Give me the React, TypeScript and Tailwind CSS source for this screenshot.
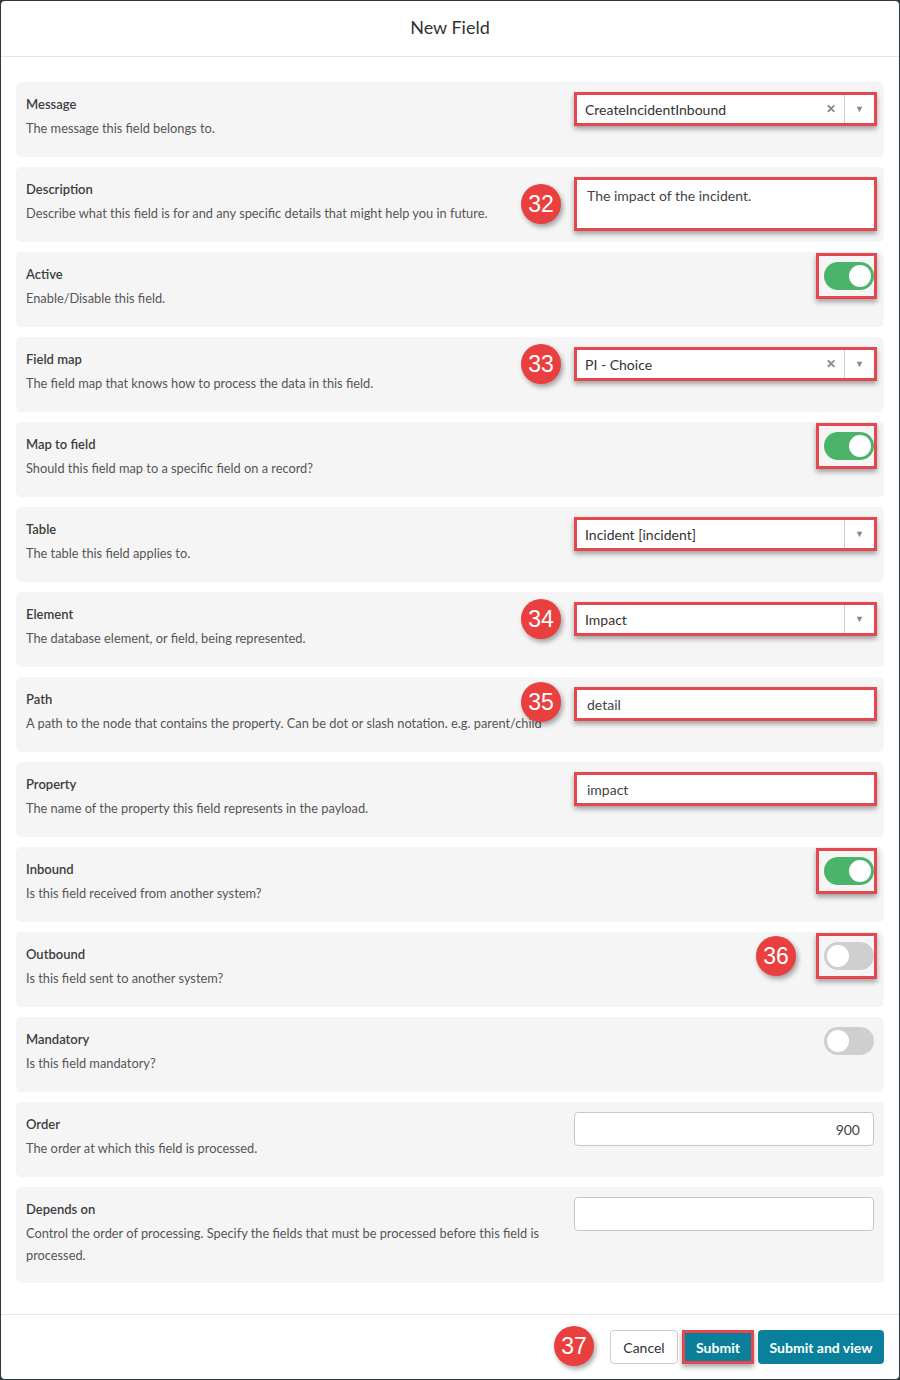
import React from "react";

const RED = "border-[3px] border-[#e4474d] shadow-[0_3px_5px_rgba(0,0,0,0.35)]";

function Badge({ n, className }: { n: string; className: string }) {
  return (
    <div
      className={`absolute z-10 flex h-[40px] w-[40px] items-center justify-center rounded-full bg-[#ea3f3f] text-[23px] leading-none text-white shadow-[2px_3px_5px_rgba(0,0,0,0.35)] ${className}`}
      style={{ fontFamily: '"Liberation Sans", Arial, sans-serif' }}
    >
      {n}
    </div>
  );
}

function Toggle({ on, highlight }: { on: boolean; highlight?: boolean }) {
  return (
    <div className="relative ml-auto h-[28px] w-[50px]">
      {highlight && (
        <div className="pointer-events-none absolute -left-[8px] -right-[3px] -top-[9px] -bottom-[9px] border-[3px] border-[#e4474d] shadow-[0_3px_5px_rgba(0,0,0,0.35)]" />
      )}
      <div
        className={`flex h-[28px] w-[50px] items-center rounded-full px-[3px] ${
          on ? "justify-end bg-[#4cb46a]" : "justify-start bg-[#cfcfcf]"
        }`}
      >
        <div className="h-[22px] w-[22px] rounded-full bg-white" />
      </div>
    </div>
  );
}

function Select({ value, clear }: { value: string; clear?: boolean }) {
  return (
    <div className={`flex h-[34px] w-[303px] items-stretch bg-white ${RED}`}>
      <div className="flex flex-1 items-center pl-[8px] text-[14px] text-[#333]">{value}</div>
      {clear && (
        <div className="flex w-[26px] items-center justify-center text-[12px] font-bold text-[#888]">✕</div>
      )}
      <div className="flex w-[30px] items-center justify-center border-l border-[#cfcfcf] text-[9px] text-[#888]">▼</div>
    </div>
  );
}

function TextInput({ value, h = 34 }: { value: string; h?: number }) {
  return (
    <div
      className={`w-[303px] bg-white px-[10px] text-[14px] text-[#444] ${RED} ${
        h > 40 ? "pt-[5px]" : "flex items-center"
      }`}
      style={{ height: h }}
    >
      {value}
    </div>
  );
}

function PlainInput({ value, right }: { value: string; right?: boolean }) {
  return (
    <div
      className={`flex h-[34px] w-[300px] items-center rounded-[4px] border border-[#c8c8c8] bg-white px-[13px] text-[14px] text-[#444] ${
        right ? "justify-end" : ""
      }`}
    >
      {value}
    </div>
  );
}

function Row({
  label,
  desc,
  children,
  badge,
}: {
  label: string;
  desc: string;
  children?: React.ReactNode;
  badge?: React.ReactNode;
}) {
  return (
    <div className="relative flex min-h-[75px] rounded-[5px] bg-[#f5f5f5] px-[10px]">
      <div className="w-[530px] pb-[17px] pt-[12px]">
        <div className="text-[13px] font-semibold leading-[20px] text-[#3d3d3d]">{label}</div>
        <div className="mt-[3px] text-[12.8px] leading-[22px] text-[#555]">{desc}</div>
      </div>
      <div className="ml-auto flex w-[300px] flex-col pt-[10px]">{children}</div>
      {badge}
    </div>
  );
}

export default function App() {
  return (
    <div
      className="h-[1380px] w-[900px] bg-[#2f3a3c] p-[1px]"
      style={{ fontFamily: "Lato, 'Open Sans', sans-serif" }}
    >
      <div className="flex h-[1378px] flex-col rounded-[4px] bg-white">
        <div className="flex h-[56px] items-center justify-center border-b border-[#e5e5e5] pb-[2px] text-[18px] text-[#333]">
          New Field
        </div>
        <div className="flex flex-col gap-[10px] px-[15px] pb-[31px] pt-[25px]">
          <Row label="Message" desc="The message this field belongs to.">
            <Select value="CreateIncidentInbound" clear />
          </Row>
          <Row
            label="Description"
            desc="Describe what this field is for and any specific details that might help you in future."
            badge={<Badge n="32" className="left-[505px] top-[17px]" />}
          >
            <TextInput value="The impact of the incident." h={54} />
          </Row>
          <Row label="Active" desc="Enable/Disable this field.">
            <Toggle on highlight />
          </Row>
          <Row
            label="Field map"
            desc="The field map that knows how to process the data in this field."
            badge={<Badge n="33" className="left-[505px] top-[7px]" />}
          >
            <Select value="PI - Choice" clear />
          </Row>
          <Row label="Map to field" desc="Should this field map to a specific field on a record?">
            <Toggle on highlight />
          </Row>
          <Row label="Table" desc="The table this field applies to.">
            <Select value="Incident [incident]" />
          </Row>
          <Row
            label="Element"
            desc="The database element, or field, being represented."
            badge={<Badge n="34" className="left-[505px] top-[7px]" />}
          >
            <Select value="Impact" />
          </Row>
          <Row
            label="Path"
            desc="A path to the node that contains the property. Can be dot or slash notation. e.g. parent/child"
            badge={<Badge n="35" className="left-[505px] top-[5px]" />}
          >
            <TextInput value="detail" />
          </Row>
          <Row label="Property" desc="The name of the property this field represents in the payload.">
            <TextInput value="impact" />
          </Row>
          <Row label="Inbound" desc="Is this field received from another system?">
            <Toggle on highlight />
          </Row>
          <Row
            label="Outbound"
            desc="Is this field sent to another system?"
            badge={<Badge n="36" className="left-[740px] top-[4px]" />}
          >
            <Toggle on={false} highlight />
          </Row>
          <Row label="Mandatory" desc="Is this field mandatory?">
            <Toggle on={false} />
          </Row>
          <Row label="Order" desc="The order at which this field is processed.">
            <PlainInput value="900" right />
          </Row>
          <Row
            label="Depends on"
            desc="Control the order of processing. Specify the fields that must be processed before this field is processed."
          >
            <PlainInput value="" />
          </Row>
        </div>
        <div className="relative flex flex-1 items-start justify-end gap-[4px] border-t border-[#e5e5e5] pr-[15px] pt-[15px]">
          <Badge n="37" className="left-[553px] top-[11px]" />
          <button className="flex h-[34px] w-[68px] items-center justify-center rounded-[4px] border border-[#cccccc] bg-white text-[14px] text-[#333]">
            Cancel
          </button>
          <button className="flex h-[34px] w-[72px] items-center justify-center border-[3px] border-[#e4474d] bg-[#0a7f99] text-[14px] font-bold text-white shadow-[0_3px_5px_rgba(0,0,0,0.35)]">
            Submit
          </button>
          <button className="flex h-[34px] w-[126px] items-center justify-center rounded-[4px] bg-[#0a819c] text-[14px] font-bold text-white">
            Submit and view
          </button>
        </div>
      </div>
    </div>
  );
}
